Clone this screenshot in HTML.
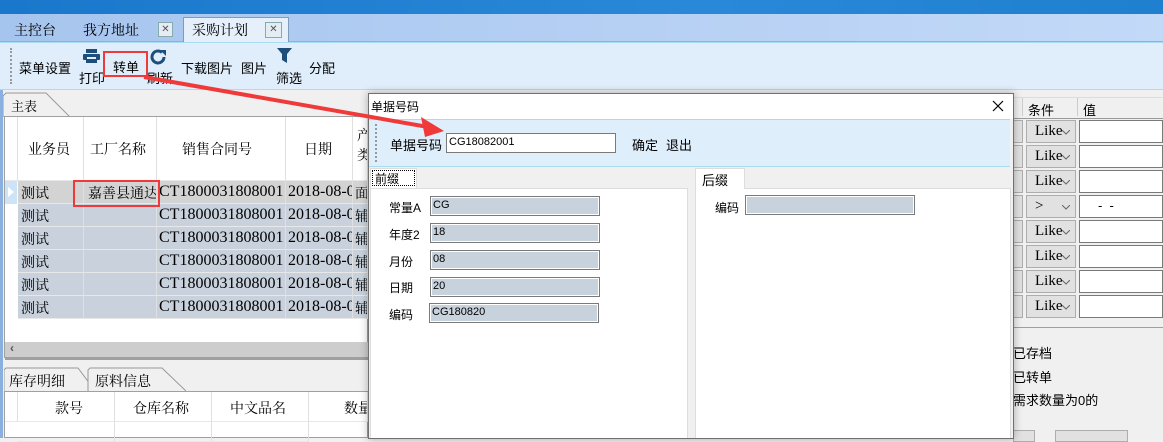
<!DOCTYPE html>
<html><head><meta charset="utf-8"><style>
*{margin:0;padding:0;box-sizing:border-box}
body{width:1163px;height:438px;overflow:hidden;position:relative;background:#f0f0f0;font-family:"Liberation Sans","Noto Sans CJK SC",sans-serif;font-size:12px;color:#000}
.a{position:absolute}
.serif{font-family:"Liberation Serif","Noto Serif CJK SC",serif}
.t{position:absolute;white-space:nowrap}
.inp{position:absolute;background:#c8d2dc;border:1px solid #7a7a7a;box-shadow:inset 0 0 0 1px #fff;font-size:11px;padding:2px 0 0 2px;height:20px}
.cell{position:absolute;border-right:1px solid #e0e0e0;border-bottom:1px solid #e8e8e8;overflow:hidden;white-space:nowrap}
.cb{position:absolute;background:#e1e1e1;border:1px solid #adadad;height:23px;font-family:"Liberation Serif",serif;font-size:15px;padding:2px 0 0 8px}
.vb{position:absolute;background:#fff;border:1px solid #7a7a7a;height:23px}
</style></head><body>
<div class="a" style="left:0;top:0;width:1163px;height:14px;background:linear-gradient(90deg,#1a78cc,#2a88d8 60%,#1f80d0)"></div>
<div class="a" style="left:0;top:14px;width:1163px;height:28px;background:linear-gradient(90deg,#a6c5ee,#c3d9f8);border-bottom:1px solid #8fb0d8"></div>
<div class="t serif" style="left:14px;top:20px;font-size:14px">主控台</div>
<div class="t serif" style="left:83px;top:20px;font-size:14px">我方地址</div>
<div class="a" style="left:158px;top:22px;width:15px;height:15px;border:1px solid #8aa;background:#e4ecf4;font-size:10px;text-align:center;line-height:13px;color:#555">✕</div>
<div class="a" style="left:183px;top:17px;width:106px;height:26px;background:#e6f0fb;border:1px solid #7f9db9;border-bottom:none"></div>
<div class="t serif" style="left:192px;top:20px;font-size:14px">采购计划</div>
<div class="a" style="left:265px;top:22px;width:17px;height:16px;border:1px solid #8aa;background:#e4ecf4;font-size:10px;text-align:center;line-height:14px;color:#555">✕</div>
<div class="a" style="left:0;top:42px;width:1163px;height:48px;background:#e0eefb;border-top:1px solid #a9dcf2;border-bottom:1px solid #a9dcf2"></div>
<div class="a" style="left:10px;top:48px;height:36px;border-left:2px dotted #999"></div>
<div class="t" style="left:19px;top:58px;font-size:13px">菜单设置</div>
<svg class="a" style="left:83px;top:49px" width="17" height="14"><rect x="3" y="0" width="11" height="4" fill="#1d4f7a"/><rect x="0" y="5" width="17" height="6" rx="1" fill="#1d4f7a"/><rect x="4" y="8" width="9" height="2" fill="#e0eefb"/><rect x="3" y="11" width="11" height="3" fill="#1d4f7a"/></svg>
<div class="t" style="left:79px;top:68px;font-size:13px">打印</div>
<div class="a" style="left:103px;top:51px;width:45px;height:26px;border:2px solid #f03a3a"></div>
<div class="t" style="left:113px;top:57px;font-size:13px">转单</div>
<svg class="a" style="left:150px;top:49px" width="18" height="16"><path d="M14 8a6 6 0 1 1-2-4.5" fill="none" stroke="#1d4f7a" stroke-width="3"/><path d="M10 1h6v6z" fill="#1d4f7a"/></svg>
<div class="t" style="left:147px;top:68px;font-size:13px">刷新</div>
<div class="t" style="left:181px;top:58px;font-size:13px">下载图片</div>
<div class="t" style="left:241px;top:58px;font-size:13px">图片</div>
<svg class="a" style="left:277px;top:48px" width="15" height="15"><path d="M0 0h15l-5 6v9l-5-3v-6z" fill="#1d4f7a"/></svg>
<div class="t" style="left:276px;top:68px;font-size:13px">筛选</div>
<div class="t" style="left:309px;top:58px;font-size:13px">分配</div>
<!-- left panel -->
<div class="a" style="left:0;top:90px;width:3px;height:348px;background:#8ab0e0"></div>
<svg class="a" style="left:3px;top:92px" width="68" height="25"><path d="M0 25V4l3-3h40l24 24z" fill="#f0f0f0" stroke="#999"/></svg>
<div class="t serif" style="left:11px;top:96px;font-size:13px">主表</div>
<div class="a" style="left:4px;top:116px;width:364px;height:242px;background:#fff;border:1px solid #a0a0a0"></div>
<div class="a serif" style="left:5px;top:117px;width:363px;font-size:14px">
<div class="cell" style="left:0;top:0;width:13px;height:64px"></div>
<div class="cell" style="left:13px;top:0;width:66px;height:64px;padding:22px 0 0 10px">业务员</div>
<div class="cell" style="left:79px;top:0;width:73px;height:64px;padding:22px 0 0 6px">工厂名称</div>
<div class="cell" style="left:152px;top:0;width:129px;height:64px;padding:22px 0 0 25px">销售合同号</div>
<div class="cell" style="left:281px;top:0;width:67px;height:64px;padding:22px 0 0 18px">日期</div>
<div class="cell" style="left:348px;top:0;width:15px;height:64px;padding:8px 0 0 4px">产<br>类</div>
</div>
<div class="a serif" style="left:5px;top:181px;width:363px;height:138px;font-size:14px;overflow:hidden">
<div class="a" style="left:0;top:0;width:13px;height:138px;background:#fff"></div>
<div class="a" style="left:0;top:0;width:12px;height:23px;background:#cde3f7"></div>
<div class="a" style="left:3px;top:6px;width:0;height:0;border-left:6px solid #fff;border-top:5px solid transparent;border-bottom:5px solid transparent"></div>
<div id="rows"></div>
</div>
<div class="a" style="left:5px;top:342px;width:363px;height:15px;background:#cdcdcd"></div>
<div class="t" style="left:10px;top:341px;font-size:12px;font-weight:bold;color:#555">‹</div>
<div class="a" style="left:5px;top:357px;width:363px;height:3px;background:#a0a0a0"></div>
<svg class="a" style="left:4px;top:367px" width="182" height="25"><path d="M0 25V3l2-2h72l18 24z" fill="#f0f0f0" stroke="#999"/><path d="M84 25V3l2-2h72l25 24z" fill="#f0f0f0" stroke="#999"/></svg>
<div class="t serif" style="left:9px;top:371px;font-size:14px">库存明细</div>
<div class="t serif" style="left:95px;top:371px;font-size:14px">原料信息</div>
<div class="a" style="left:4px;top:391px;width:364px;height:47px;background:#fff;border:1px solid #a0a0a0"></div>
<div class="a serif" style="left:5px;top:392px;font-size:14px">
<div class="cell" style="left:0;top:0;width:13px;height:30px"></div>
<div class="cell" style="left:13px;top:0;width:97px;height:30px;padding:6px 0 0 37px">款号</div>
<div class="cell" style="left:110px;top:0;width:97px;height:30px;padding:6px 0 0 18px">仓库名称</div>
<div class="cell" style="left:207px;top:0;width:97px;height:30px;padding:6px 0 0 18px">中文品名</div>
<div class="cell" style="left:304px;top:0;width:59px;height:30px;padding:6px 0 0 35px">数量</div>
<div class="cell" style="left:13px;top:30px;width:97px;height:20px"></div>
<div class="cell" style="left:110px;top:30px;width:97px;height:20px"></div>
<div class="cell" style="left:207px;top:30px;width:97px;height:20px"></div>
</div>
<!-- right panel -->
<div class="a" style="left:1013px;top:92px;width:150px;height:346px;background:#f0f0f0"></div>
<div class="a" style="left:1013px;top:97px;width:150px;height:22px;background:#f0f0f0;border-top:1px solid #ddd;border-bottom:1px solid #999"></div>
<div class="a" style="left:1022px;top:98px;height:18px;border-left:1px solid #ccc"></div>
<div class="a" style="left:1077px;top:98px;height:18px;border-left:1px solid #ccc"></div>
<div class="t" style="left:1028px;top:100px;font-size:13px">条件</div>
<div class="t" style="left:1083px;top:100px;font-size:13px">值</div>
<div id="rp"></div>
<div class="a" style="left:1013px;top:327px;width:150px;border-top:1px solid #a0a0a0"></div>
<div class="t" style="left:1013px;top:343px;font-size:13px">已存档</div>
<div class="t" style="left:1013px;top:367px;font-size:13px">已转单</div>
<div class="t" style="left:1013px;top:390px;font-size:13px">需求数量为0的</div>
<div class="a" style="left:1013px;top:430px;width:22px;height:12px;background:#e1e1e1;border:1px solid #adadad"></div>
<div class="a" style="left:1055px;top:430px;width:73px;height:12px;background:#e1e1e1;border:1px solid #adadad"></div>
<!-- dialog -->
<div class="a" style="left:368px;top:93px;width:646px;height:346px;background:#f0f0f0;border:1px solid #707070;box-shadow:0 0 8px rgba(0,0,0,.3)"></div>
<div class="a" style="left:369px;top:94px;width:644px;height:25px;background:#fff"></div>
<div class="t" style="left:371px;top:98px;font-size:12px">单据号码</div>
<svg class="a" style="left:992px;top:100px" width="12" height="12"><path d="M1 1L11 11M11 1L1 11" stroke="#000" stroke-width="1.2"/></svg>
<div class="a" style="left:369px;top:119px;width:641px;height:48px;background:#dfeefb;border-top:1px solid #a9dcf2;border-bottom:1px solid #a9dcf2"></div>
<div class="a" style="left:375px;top:124px;height:38px;border-left:2px dotted #999"></div>
<div class="t" style="left:390px;top:135px;font-size:13px">单据号码</div>
<div class="a" style="left:446px;top:133px;width:170px;height:20px;background:#fff;border:1px solid #7a7a7a;font-size:11px;padding:2px 0 0 2px">CG18082001</div>
<div class="t" style="left:632px;top:135px;font-size:13px">确定</div>
<div class="t" style="left:666px;top:135px;font-size:13px">退出</div>
<div class="a" style="left:370px;top:168px;width:47px;height:21px;background:#fff;border:1px solid #ddd"></div>
<div class="a" style="left:372px;top:170px;width:43px;height:16px;border:1px dotted #000"></div>
<div class="t" style="left:375px;top:170px;font-size:12px">前缀</div>
<div class="a" style="left:370px;top:188px;width:318px;height:250px;background:#fff;border:1px solid #ddd;border-bottom:none"></div>
<div class="a" style="left:695px;top:168px;width:50px;height:21px;background:#fff;border:1px solid #ddd;border-bottom:none"></div>
<div class="t" style="left:702px;top:170px;font-size:13px">后缀</div>
<div class="a" style="left:695px;top:188px;width:316px;height:250px;background:#fff;border:1px solid #ddd;border-bottom:none"></div>
<div class="a" style="left:696px;top:188px;width:48px;height:2px;background:#fff"></div>
<div class="t" style="left:389px;top:199px;font-size:12px">常量A</div>
<div class="inp" style="left:430px;top:196px;width:170px">CG</div>
<div class="t" style="left:389px;top:226px;font-size:12px">年度2</div>
<div class="inp" style="left:430px;top:223px;width:170px">18</div>
<div class="t" style="left:389px;top:253px;font-size:12px">月份</div>
<div class="inp" style="left:430px;top:250px;width:170px">08</div>
<div class="t" style="left:389px;top:279px;font-size:12px">日期</div>
<div class="inp" style="left:430px;top:277px;width:170px">20</div>
<div class="t" style="left:389px;top:306px;font-size:12px">编码</div>
<div class="inp" style="left:429px;top:303px;width:170px">CG180820</div>
<div class="t" style="left:715px;top:199px;font-size:12px">编码</div>
<div class="inp" style="left:745px;top:195px;width:170px"></div>
<div class="a" style="left:73px;top:180px;width:87px;height:27px;border:2px solid #f03a3a"></div>
<svg class="a" style="left:0;top:0" width="1163" height="438"><path d="M144 77L428 127" stroke="#f03a3a" stroke-width="4"/><path d="M444 131L421 117L425 137z" fill="#f03a3a"/></svg>
<script>
var h='';
for(var i=0;i<6;i++){var y=i*23;var bg=i==0?'#d3d3d3':'#c8d1dc';
h+='<div class="cell" style="left:13px;top:'+y+'px;width:66px;height:23px;background:'+bg+';padding:2px 0 0 3px">测试</div>';
h+='<div class="cell" style="left:79px;top:'+y+'px;width:73px;height:23px;background:'+bg+';padding:2px 0 0 4px">'+(i==0?'嘉善县通达':'')+'</div>';
h+='<div class="cell" style="left:152px;top:'+y+'px;width:129px;height:23px;background:'+bg+';padding:2px 0 0 2px;font-size:16px">CT1800031808001</div>';
h+='<div class="cell" style="left:281px;top:'+y+'px;width:67px;height:23px;background:'+bg+';padding:2px 0 0 2px;font-size:16px">2018-08-0</div>';
h+='<div class="cell" style="left:348px;top:'+y+'px;width:15px;height:23px;background:'+bg+';padding:2px 0 0 2px">'+(i==0?'面':'辅')+'</div>';}
document.getElementById('rows').innerHTML=h;
var r='';
var arr='<svg style="position:absolute;right:5px;top:9px" width="8" height="5"><path d="M0 0L4 4L8 0" fill="none" stroke="#666"/></svg>';
for(var j=0;j<8;j++){var y=120+j*25;
r+='<div class="a" style="left:1013px;top:'+y+'px;width:10px;height:23px;background:#e1e1e1;border:1px solid #adadad"></div>';
r+='<div class="cb" style="left:1026px;top:'+y+'px;width:50px">'+(j==3?'&gt;':'Like')+arr+'</div>';
r+='<div class="vb" style="left:1079px;top:'+y+'px;width:84px">'+(j==3?'<span style="position:absolute;left:18px;top:2px;font-size:13px">-&nbsp;&nbsp;-</span>':'')+'</div>';}
document.getElementById('rp').innerHTML=r;
</script>
</body></html>
